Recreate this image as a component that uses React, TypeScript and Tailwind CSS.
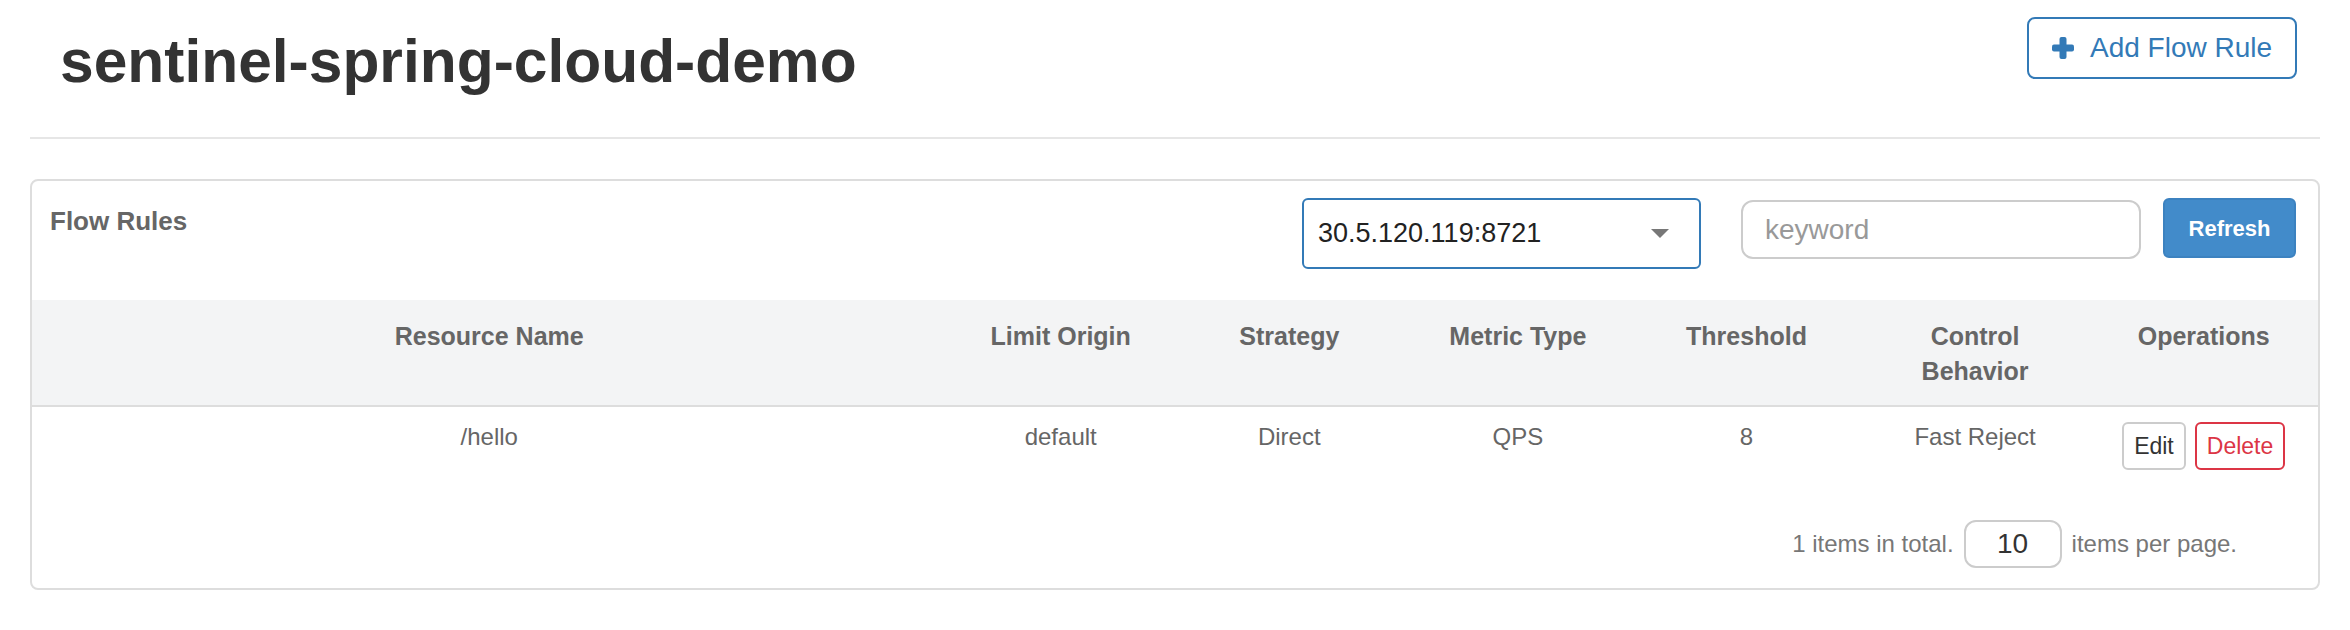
import React from 'react';

const font = { fontFamily: '"Liberation Sans", Arial, sans-serif' };

type Rule = {
  resource: string;
  limitApp: string;
  strategy: string;
  grade: string;
  count: number;
  behavior: string;
};

const rules: Rule[] = [
  { resource: '/hello', limitApp: 'default', strategy: 'Direct', grade: 'QPS', count: 8, behavior: 'Fast Reject' },
];

function PlusIcon() {
  return (
    <svg width="22" height="22" viewBox="0 0 22 22" className="shrink-0">
      <rect x="7.5" y="0" width="7" height="22" rx="2" fill="#337ab7" />
      <rect x="0" y="7.5" width="22" height="7" rx="2" fill="#337ab7" />
    </svg>
  );
}

function App() {
  return (
    <div className="min-h-screen bg-white px-[30px]" style={font}>
      {/* page header */}
      <div className="flex items-start justify-between">
        <h1 className="ml-[30px] mt-[28px] text-[60.5px] leading-[66px] font-bold text-[#333]">
          sentinel-spring-cloud-demo
        </h1>
        <button className="mt-[17px] mr-[23px] h-[62px] w-[270px] flex items-center justify-center gap-[16px] border-2 border-[#337ab7] rounded-[8px] text-[#337ab7] text-[28px] bg-white">
          <PlusIcon />
          <span>Add Flow Rule</span>
        </button>
      </div>
      <div className="mt-[43px] h-[2px] bg-[#e6e6e6]" />

      {/* panel */}
      <div className="mt-[40px] border-2 border-[#dddddd] rounded-[8px] overflow-hidden">
        <div className="flex items-start justify-between pl-[18px] pr-[22px] pt-[17px] pb-[31px]">
          <div className="mt-[5px] text-[26px] leading-[36px] font-bold text-[#666]">Flow Rules</div>
          <div className="flex items-start">
            <div className="w-[399px] h-[71px] border-2 border-[#337ab7] rounded-[6px] flex items-center justify-between pl-[14px] pr-[30px]">
              <span className="text-[27px] text-[#222]">30.5.120.119:8721</span>
              <svg width="18" height="9" viewBox="0 0 18 9">
                <polygon points="0,0 18,0 9,9" fill="#777" />
              </svg>
            </div>
            <input
              className="ml-[40px] mt-[2px] w-[400px] h-[59px] border-2 border-[#cccccc] rounded-[12px] px-[22px] text-[28px] text-[#333] placeholder:text-[#999] outline-none"
              placeholder="keyword"
              style={font}
            />
            <button className="ml-[22px] w-[133px] h-[60px] rounded-[6px] bg-[#428bca] border-2 border-[#3c82c0] text-white font-bold text-[22px]">
              Refresh
            </button>
          </div>
        </div>

        <table className="w-full table-fixed border-collapse">
          <thead>
            <tr className="bg-[#f3f4f5] border-b-2 border-[#dddddd]">
              {['Resource Name', 'Limit Origin', 'Strategy', 'Metric Type', 'Threshold'].map((h, i) => (
                <th
                  key={h}
                  className={`${i === 0 ? 'w-[40%]' : 'w-[10%]'} align-top px-[16px] pt-[19px] pb-[16px] text-center font-bold text-[25px] leading-[35px] text-[#666]`}
                >
                  {h}
                </th>
              ))}
              <th className="w-[10%] align-top px-[16px] pt-[19px] pb-[16px] text-center font-bold text-[25px] leading-[35px] text-[#666]">
                Control
                <br />
                Behavior
              </th>
              <th className="w-[10%] align-top px-[16px] pt-[19px] pb-[16px] text-center font-bold text-[25px] leading-[35px] text-[#666]">
                Operations
              </th>
            </tr>
          </thead>
          <tbody>
            {rules.map((r) => (
              <tr key={r.resource}>
                <td className="align-top pt-[13px] pb-[16px] text-center text-[24px] leading-[34px] text-[#666]">{r.resource}</td>
                <td className="align-top pt-[13px] pb-[16px] text-center text-[24px] leading-[34px] text-[#666]">{r.limitApp}</td>
                <td className="align-top pt-[13px] pb-[16px] text-center text-[24px] leading-[34px] text-[#666]">{r.strategy}</td>
                <td className="align-top pt-[13px] pb-[16px] text-center text-[24px] leading-[34px] text-[#666]">{r.grade}</td>
                <td className="align-top pt-[13px] pb-[16px] text-center text-[24px] leading-[34px] text-[#666]">{r.count}</td>
                <td className="align-top pt-[13px] pb-[16px] text-center text-[24px] leading-[34px] text-[#666]">{r.behavior}</td>
                <td className="align-top pt-[13px] pb-[16px]">
                  <div className="mt-[2px] flex justify-center gap-[9px]">
                    <button className="h-[48px] px-[10px] border-2 border-[#cccccc] rounded-[6px] bg-white text-[23px] text-[#333]">
                      Edit
                    </button>
                    <button className="h-[48px] px-[10px] border-2 border-[#dc3545] rounded-[6px] bg-white text-[23px] text-[#dc3545]">
                      Delete
                    </button>
                  </div>
                </td>
              </tr>
            ))}
          </tbody>
        </table>

        {/* pagination */}
        <div className="mt-[34px] pb-[20px] pr-[81px] flex items-center justify-end gap-[10px] text-[24px] text-[#777]">
          <span>{rules.length} items in total.</span>
          <div className="w-[98px] h-[48px] border-2 border-[#cccccc] rounded-[12px] flex items-center justify-center text-[28px] text-[#333]">
            10
          </div>
          <span>items per page.</span>
        </div>
      </div>
    </div>
  );
}

export default App;
